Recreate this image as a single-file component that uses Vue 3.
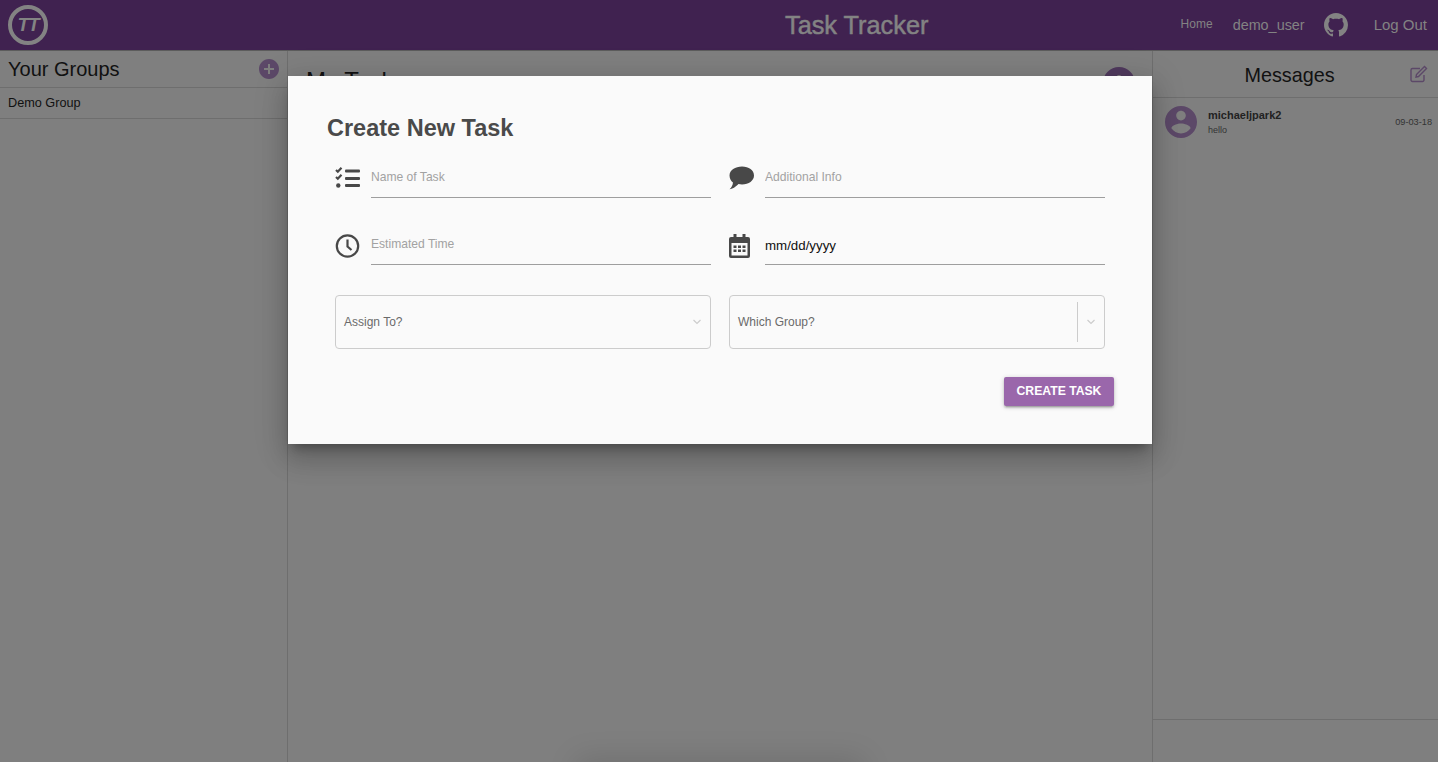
<template>
  <div class="page">
    <header class="topbar">
      <div class="logo"><span>TT</span></div>
      <h1 class="brand">Task Tracker</h1>
      <nav class="nav">
        <a class="nav__home">Home</a>
        <a class="nav__user">demo_user</a>
        <svg class="nav__gh" viewBox="0 0 16 16"><path :d="icons.github" /></svg>
        <a class="nav__out">Log Out</a>
      </nav>
    </header>

    <div class="panes">
      <aside class="groups">
        <div class="groups__head">
          <h2>Your Groups</h2>
          <svg class="plus" viewBox="2 2 20 20"><path :d="icons.plus" /></svg>
        </div>
        <div class="groups__row">Demo Group</div>
      </aside>

      <main class="tasks">
        <h2>My Tasks</h2>
        <svg class="tasks__plus" viewBox="2 2 20 20"><path :d="icons.plus" /></svg>
      </main>

      <aside class="msgs">
        <div class="msgs__head">
          <h2>Messages</h2>
          <svg class="msgs__edit" viewBox="0 0 18 18">
            <path d="M14 10v5a1.5 1.5 0 0 1-1.5 1.5h-10A1.5 1.5 0 0 1 1 15V5a1.5 1.5 0 0 1 1.5-1.5H10" />
            <path d="M6.5 9.5 14.5 1.5l2 2-8 8-2.5.5z" />
          </svg>
        </div>
        <div class="msg">
          <svg class="msg__avatar" viewBox="2 2 20 20"><path :d="icons.person" /></svg>
          <div class="msg__body">
            <div class="msg__name">michaeljpark2</div>
            <div class="msg__text">hello</div>
          </div>
          <div class="msg__date">09-03-18</div>
        </div>
        <div class="msgs__foot"></div>
      </aside>
    </div>

    <div class="sheet-shadow"></div>

    <section class="modal">
      <h3 class="modal__title">Create New Task</h3>
      <div class="form">
        <label class="field">
          <svg class="ico" viewBox="0 0 25 23">
            <path class="ico__line" d="M1 3.5 2.8 5.2 6.5 1.2M1 10.5l1.8 1.7 3.7-4" />
            <circle cx="3.3" cy="19" r="2.2" />
            <rect x="10" y="3" width="15" height="3" rx="1" />
            <rect x="10" y="10.5" width="15" height="3" rx="1" />
            <rect x="10" y="17.5" width="15" height="3" rx="1" />
          </svg>
          <input placeholder="Name of Task" />
        </label>
        <label class="field">
          <svg class="ico" viewBox="0 0 24 22">
            <path d="M12.5 0C19 0 24 3.6 24 8.6s-5 8.6-11.5 8.6c-1.2 0-2.3-.1-3.400-.4C7.500 18.500 4 21.500 0.500 21.800c1.800-1.700 3.200-3.700 3.300-6.500C1.800 13.800.5 11.400.5 8.600.5 3.600 6 0 12.500 0z" />
          </svg>
          <input placeholder="Additional Info" />
        </label>
        <label class="field field--lower">
          <svg class="ico ico--low" viewBox="0 0 24 24">
            <circle class="ico__line" cx="12" cy="12" r="10.700" />
            <path class="ico__line" d="M12 5.500v7l4 3.500" />
          </svg>
          <input placeholder="Estimated Time" />
        </label>
        <label class="field field--lower">
          <svg class="ico ico--low ico--cal" viewBox="0 0 21 24">
            <path fill-rule="evenodd" d="M2 3h2.500V0h3v3h6V0h3v3H19a2 2 0 0 1 2 2v17a2 2 0 0 1-2 2H2a2 2 0 0 1-2-2V5a2 2 0 0 1 2-2zm.5 6v12.500h16V9z" />
            <rect v-for="c in calCells" :key="c.x + '-' + c.y" :x="c.x" :y="c.y" width="3" height="2.500" />
          </svg>
          <input class="date" value="mm/dd/yyyy" />
        </label>
        <div class="select">
          <span>Assign To?</span>
          <svg class="chev" viewBox="0 0 10 6"><path d="M1.500 1 5 4.500 8.500 1" /></svg>
        </div>
        <div class="select">
          <span>Which Group?</span>
          <i class="select__sep"></i>
          <svg class="chev" viewBox="0 0 10 6"><path d="M1.500 1 5 4.500 8.500 1" /></svg>
        </div>
      </div>
      <div class="modal__foot">
        <button class="btn">CREATE TASK</button>
      </div>
    </section>
  </div>
</template>

<script setup>
const icons = {
  github:
    'M8 0C3.58 0 0 3.58 0 8c0 3.54 2.29 6.53 5.47 7.59.4.07.55-.17.55-.38 0-.19-.01-.82-.01-1.49-2.01.37-2.53-.49-2.69-.94-.09-.23-.48-.94-.82-1.13-.28-.15-.68-.52-.01-.53.63-.01 1.08.58 1.23.82.72 1.21 1.87.87 2.33.66.07-.52.28-.87.51-1.07-1.78-.2-3.64-.89-3.64-3.95 0-.87.31-1.59.82-2.15-.08-.2-.36-1.02.08-2.12 0 0 .67-.21 2.2.82.64-.18 1.32-.27 2-.27.68 0 1.36.09 2 .27 1.53-1.04 2.2-.82 2.2-.82.44 1.1.16 1.92.08 2.12.51.56.82 1.27.82 2.15 0 3.07-1.87 3.75-3.65 3.95.29.25.54.73.54 1.48 0 1.07-.01 1.93-.01 2.2 0 .21.15.46.55.38A8.013 8.013 0 0016 8c0-4.42-3.58-8-8-8z',
  plus: 'M12 2C6.48 2 2 6.48 2 12s4.48 10 10 10 10-4.48 10-10S17.52 2 12 2zm5 11h-4v4h-2v-4H7v-2h4V7h2v4h4v2z',
  person:
    'M12 2C6.48 2 2 6.48 2 12s4.48 10 10 10 10-4.48 10-10S17.52 2 12 2zm0 3c1.66 0 3 1.34 3 3s-1.34 3-3 3-3-1.34-3-3 1.34-3 3-3zm0 14.2c-2.5 0-4.71-1.28-6-3.22.03-1.99 4-3.08 6-3.08 1.99 0 5.97 1.09 6 3.08-1.29 1.94-3.5 3.22-6 3.22z',
}

// little squares inside the calendar icon
const calCells = [4.5, 9, 13.5].flatMap((x) => [11.5, 15.5].map((y) => ({ x, y })))
</script>

<style>
html, body { margin: 0; height: 100%; overflow: hidden; }
</style>

<style scoped>
.page {
  position: relative; height: 762px; display: flex; flex-direction: column; overflow: hidden;
  background: #7f7f7f; color: #111; font-family: "Liberation Sans", Arial, sans-serif;
}
h1, h2, h3 { margin: 0; font-weight: 400; }

.topbar {
  height: 50px; flex: none; display: flex; align-items: center; padding: 0 11px 0 8px;
  background: #402250; border-bottom: 1px solid #5c5c5c; color: #838383;
}
.logo {
  width: 40px; height: 40px; box-sizing: border-box; border: 4px solid #838383; border-radius: 50%;
  display: flex; align-items: center; justify-content: center;
  font-size: 19px; font-weight: 700; font-style: italic; letter-spacing: -1px;
}
.brand { margin-left: 737px; font-size: 25.3px; font-weight: 400; -webkit-text-stroke: 0.5px #838383; }
.nav { margin-left: auto; display: flex; align-items: center; }
.nav__home { font-size: 12px; position: relative; top: -1px; }
.nav__user { font-size: 14.4px; margin-left: 20px; }
.nav__gh { width: 24px; height: 24px; fill: #838383; margin-left: 19px; }
.nav__out { font-size: 15px; margin-left: 26px; position: relative; top: -1px; }

.panes { flex: 1; min-height: 0; display: flex; }
.groups { width: 287px; flex: none; border-right: 1px solid #6e6e6e; }
.groups__head {
  height: 36px; display: flex; align-items: center; justify-content: space-between;
  padding: 0 8px 0 8px; border-bottom: 1px solid #6e6e6e;
}
.groups__head h2 { font-size: 20px; }
.plus { width: 20px; height: 20px; fill: #5c4868; }
.groups__row { height: 30px; line-height: 31px; padding-left: 8px; font-size: 12.7px; border-bottom: 1px solid #6e6e6e; }

.tasks { flex: 1; display: flex; justify-content: space-between; padding: 16px 17px 0 18px; border-right: 1px solid #6e6e6e; }
.tasks h2 { font-size: 24px; }
.tasks__plus { width: 32px; height: 32px; fill: #503a5e; }

.msgs { width: 285px; flex: none; display: flex; flex-direction: column; }
.msgs__head { position: relative; border-bottom: 1px solid #6e6e6e; display: flex; align-items: center; justify-content: center; padding: 3px 12px 0 0; box-sizing: border-box; height: 47px; }
.msgs__head h2 { font-size: 19.8px; }
.msgs__edit {
  position: absolute; right: 10px; top: 14px; width: 18px; height: 18px;
  fill: none; stroke: #5c4868; stroke-width: 1.4;
}
.msg { display: flex; align-items: center; padding: 8px 6px 0 12px; }
.msg__avatar { width: 32px; height: 32px; fill: #5c4868; flex: none; }
.msg__body { margin-left: 11px; flex: 1; padding-top: 2px; }
.msg__name { font-size: 11px; font-weight: 700; color: #222; line-height: 14px; }
.msg__text { font-size: 9px; color: #333; line-height: 16px; }
.msg__date { font-size: 9.2px; color: #333; }
.msgs__foot { margin-top: auto; height: 42px; border-top: 1px solid #6e6e6e; }

.sheet-shadow {
  position: absolute; left: 590px; bottom: -60px; width: 260px; height: 50px;
  box-shadow: 0 0 30px 14px rgba(0, 0, 0, 0.12);
}

.modal {
  position: absolute; left: 288px; top: 76px; width: 864px; height: 368px; box-sizing: border-box;
  padding: 35px 38px 0 39px; background: #fafafa;
  box-shadow: 0 16px 24px 2px rgba(0, 0, 0, 0.14), 0 6px 30px 5px rgba(0, 0, 0, 0.12), 0 8px 10px -5px rgba(0, 0, 0, 0.3);
}
.modal__title { font-size: 23.5px; line-height: 34px; font-weight: 700; color: #4a4a4a; }

.form { display: grid; grid-template-columns: 376px 376px; column-gap: 18px; margin: 9px 0 0 8px; }
.field { display: flex; align-items: center; height: 44px; }
.field--lower { margin-top: 23px; }
.ico { width: 25px; height: 24px; flex: none; margin-right: 11px; fill: #484848; position: relative; top: 2px; }
.ico--low { top: 3px; }
.ico--cal { width: 21px; margin-right: 15px; }
.ico__line { fill: none; stroke: #484848; stroke-width: 2.200; }
.field input {
  flex: 1; min-width: 0; height: 44px; box-sizing: border-box; padding: 2px 0 0; border: none;
  border-bottom: 1px solid #9e9e9e; outline: none; background: transparent;
  font-family: inherit; font-size: 12.1px; color: #111;
}
.field input::placeholder { color: #a2a2a2; opacity: 1; }
.field input.date { font-size: 13.3px; padding-top: 5px; }

.select {
  margin-top: 30px; height: 54px; box-sizing: border-box; display: flex; align-items: center;
  padding: 0 8px; border: 1px solid #ccc; border-radius: 4px; font-size: 12px; color: #6a6a6a;
}
.select span { flex: 1; }
.select__sep { width: 1px; height: 40px; background: #ccc; margin: 0 8px 0 1px; }
.chev { width: 10px; height: 6px; fill: none; stroke: #ccc; stroke-width: 1.200; }

.modal__foot { display: flex; justify-content: flex-end; margin-top: 28px; }
.btn {
  width: 110px; height: 29px; padding: 0 0 2px; border: none; border-radius: 2px; background: #9a67ab; color: #fff;
  font-family: inherit; font-size: 12.2px; font-weight: 700;
  box-shadow: 0 2px 2px 0 rgba(0, 0, 0, 0.14), 0 3px 1px -2px rgba(0, 0, 0, 0.12), 0 1px 5px 0 rgba(0, 0, 0, 0.2);
}
</style>
